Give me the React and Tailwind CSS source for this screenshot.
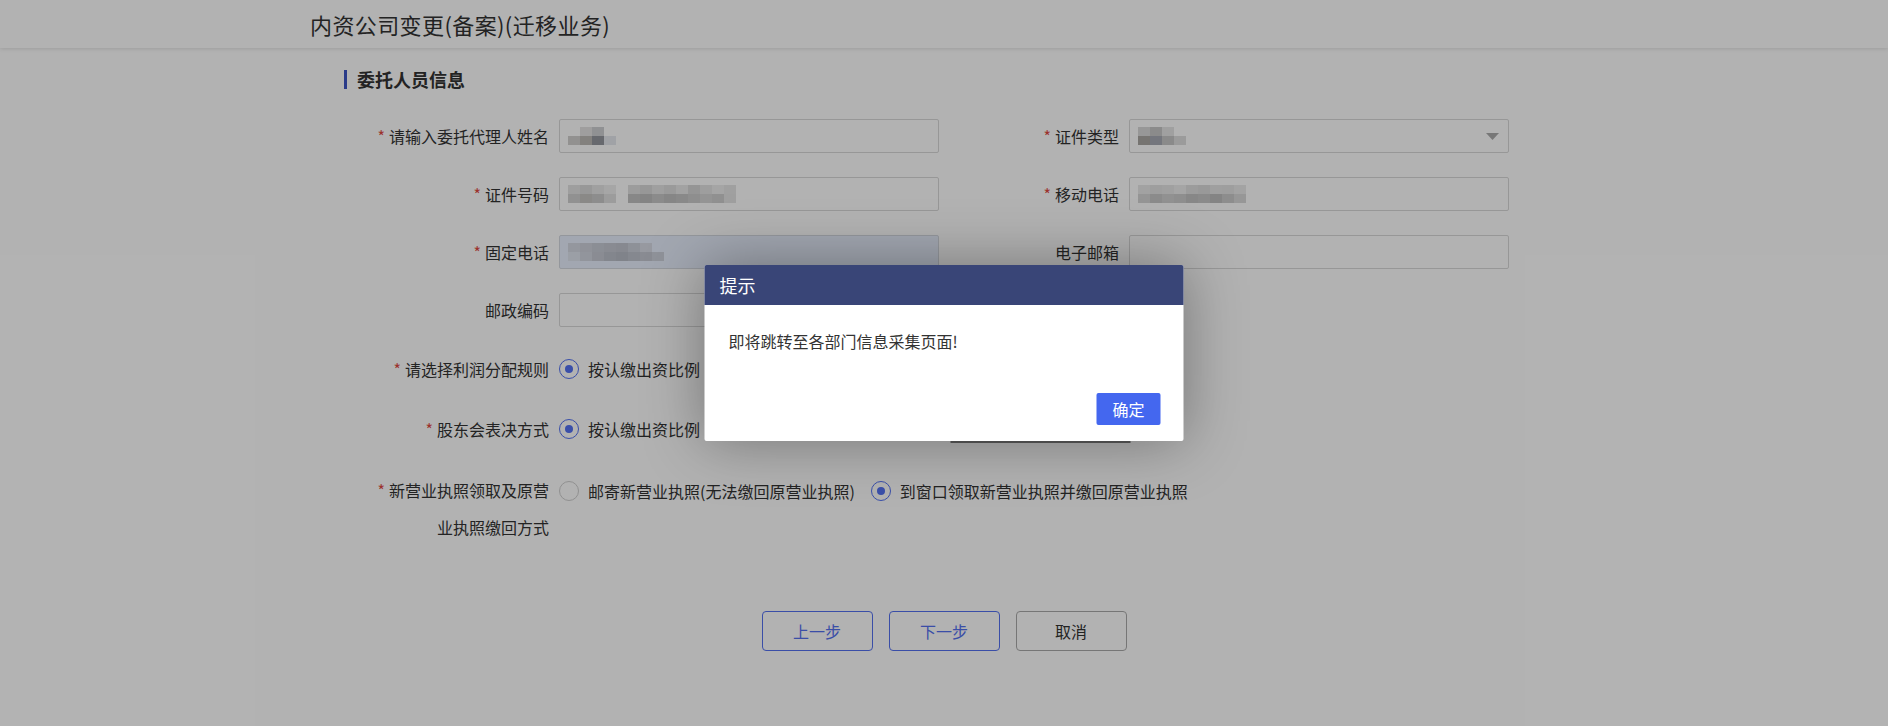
import React from "react";

const font = "font-['Noto_Sans_CJK_SC','Noto_Sans',sans-serif]";

// pixelated (mosaic) values, pre-mask colours
const nameCells = [
  ["bg-transparent", "bg-[#e4e3e2]", "bg-[#cfd0d3]", "bg-transparent"],
  ["bg-[#d2d0ce]", "bg-[#bcb9b5]", "bg-[#94979e]", "bg-[#e6e8ee]"],
];
const idCells = [
  ["bg-[#e2e2e2]", "bg-[#dadada]", "bg-[#e6e6e6]", "bg-[#eeeeee]", "bg-transparent", "bg-[#e0e0e0]", "bg-[#d8d8d8]", "bg-[#e4e4e4]", "bg-[#dddddd]", "bg-[#e8e8e8]", "bg-[#d6d6d6]", "bg-[#e2e2e2]", "bg-[#ececec]", "bg-[#e6e6e6]"],
  ["bg-[#d0d0d0]", "bg-[#c6c4c2]", "bg-[#cbcbcb]", "bg-[#e0e0e0]", "bg-transparent", "bg-[#c2c2c2]", "bg-[#bdbdbd]", "bg-[#c8c8c8]", "bg-[#c0c0c0]", "bg-[#c4c4c4]", "bg-[#cccccc]", "bg-[#d4d4d4]", "bg-[#cfcfcf]", "bg-[#e4e4e4]"],
];
const typeCells = [
  ["bg-[#d8d8d8]", "bg-[#c8c8c8]", "bg-[#e6e6e6]", "bg-transparent"],
  ["bg-[#a9a6a3]", "bg-[#a7a9b4]", "bg-[#c6c6c6]", "bg-[#dedede]"],
];
const mobileCells = [
  ["bg-[#e8e8e8]", "bg-[#e2e2e2]", "bg-[#e6e6e6]", "bg-[#ececec]", "bg-[#e0e0e0]", "bg-[#dcdcdc]", "bg-[#e4e4e4]", "bg-[#e2e2e2]", "bg-[#eaeaea]"],
  ["bg-[#d6d6d6]", "bg-[#c8c8c8]", "bg-[#d0d0d0]", "bg-[#cccccc]", "bg-[#c2c2c2]", "bg-[#c6c6c6]", "bg-[#bebebe]", "bg-[#cacaca]", "bg-[#d8d8d8]"],
];
const phoneCells = [
  ["bg-[#d4d8e2]", "bg-[#cfd2dc]", "bg-[#c8ccd6]", "bg-[#c4c7d1]", "bg-[#c2c5cf]", "bg-[#ccd0da]", "bg-[#d8dce6]", "bg-transparent", "bg-transparent"],
  ["bg-[#dfe4ee]", "bg-[#d2d6e0]", "bg-[#c6c9d3]", "bg-[#bcc0ca]", "bg-[#b8bcc6]", "bg-[#bfc3cd]", "bg-[#c4c8d2]", "bg-[#cdd1db]", "bg-transparent"],
];

function Mosaic({ cells }) {
  return (
    <div className="flex flex-col">
      {cells.map((row, i) => (
        <div key={i} className="flex">
          {row.map((c, j) => (
            <span key={j} className={"w-[12px] h-[9px] " + c} />
          ))}
        </div>
      ))}
    </div>
  );
}

function Label({ required, children }) {
  return (
    <div className="w-[180px] shrink-0 text-right whitespace-nowrap text-[16px] leading-[34px] text-[#333]">
      {required && <span className="text-[#e0483f] mr-[4px]">*</span>}
      {children}
    </div>
  );
}

function Box({ children, fill, select }) {
  return (
    <div
      className={
        "relative w-[380px] h-[34px] rounded-[2px] border flex items-center pl-[8px] " +
        (fill ? "bg-[#e8f0fe] border-[#d4d8e0]" : "bg-white border-[#d9d9d9]")
      }
    >
      {children}
      {select && (
        <svg className="absolute right-[9px] top-[13px]" width="13" height="7" viewBox="0 0 13 7">
          <path d="M0 0h13L6.5 7z" fill="#ababab" />
        </svg>
      )}
    </div>
  );
}

function Field({ label, required, children }) {
  return (
    <div className="flex items-center w-[570px]">
      <Label required={required}>{label}</Label>
      <div className="ml-[10px]">{children}</div>
    </div>
  );
}

function Radio({ checked, children }) {
  return (
    <div className="flex items-center gap-[9px]">
      {checked ? (
        <span className="w-[20px] h-[20px] rounded-full border-[1.5px] border-[#5371f2] flex items-center justify-center">
          <span className="w-[8px] h-[8px] rounded-full bg-[#5371f2]" />
        </span>
      ) : (
        <span className="w-[20px] h-[20px] rounded-full border-[1.5px] border-[#cfcfcf]" />
      )}
      <span className="text-[16px] text-[#333]">{children}</span>
    </div>
  );
}

export default function App() {
  return (
    <div className={"relative min-h-[726px] bg-white overflow-hidden " + font}>
      <header className="h-[48px] bg-white shadow-[0_1px_4px_rgba(0,0,0,0.12)]">
        <div className="w-[1268px] mx-auto h-full flex items-center text-[22px] tracking-[0.4px] text-[#333]">
          内资公司变更(备案)(迁移业务)
        </div>
      </header>

      <main className="w-[1200px] mx-auto">
        <div className="mt-[22px] h-[19px] flex items-center border-l-[3px] border-[#3d55c4] pl-[10px] text-[18px] font-bold text-[#333]">
          委托人员信息
        </div>

        <div className="mt-[30px] pl-[25px] flex flex-col gap-[24px]">
          <div className="flex">
            <Field label="请输入委托代理人姓名" required>
              <Box><Mosaic cells={nameCells} /></Box>
            </Field>
            <Field label="证件类型" required>
              <Box select><Mosaic cells={typeCells} /></Box>
            </Field>
          </div>
          <div className="flex">
            <Field label="证件号码" required>
              <Box><Mosaic cells={idCells} /></Box>
            </Field>
            <Field label="移动电话" required>
              <Box><Mosaic cells={mobileCells} /></Box>
            </Field>
          </div>
          <div className="flex">
            <Field label="固定电话" required>
              <Box fill><Mosaic cells={phoneCells} /></Box>
            </Field>
            <Field label="电子邮箱">
              <Box />
            </Field>
          </div>
          <div className="flex">
            <Field label="邮政编码">
              <Box />
            </Field>
          </div>
        </div>

        <div className="mt-[22px] pl-[25px] flex flex-col gap-[20px]">
          <div className="flex items-center h-[40px]">
            <Label required>请选择利润分配规则</Label>
            <div className="ml-[10px]">
              <Radio checked>按认缴出资比例</Radio>
            </div>
          </div>
          <div className="flex items-center h-[40px]">
            <Label required>股东会表决方式</Label>
            <div className="ml-[10px]">
              <Radio checked>按认缴出资比例</Radio>
            </div>
          </div>
          <div className="mt-[3px] flex items-start">
            <div className="w-[180px] shrink-0 text-right whitespace-nowrap text-[16px] leading-[37px] text-[#333]">
              <span className="text-[#e0483f] mr-[4px]">*</span>新营业执照领取及原营
              <br />
              业执照缴回方式
            </div>
            <div className="ml-[10px] h-[37px] flex items-center gap-[16px]">
              <Radio>邮寄新营业执照(无法缴回原营业执照)</Radio>
              <Radio checked>到窗口领取新营业执照并缴回原营业执照</Radio>
            </div>
          </div>
        </div>

        <div className="mt-[65px] flex justify-center gap-[16px]">
          <button className="w-[111px] h-[40px] rounded-[4px] border border-[#5370f0] text-[#5370f0] text-[16px]">
            上一步
          </button>
          <button className="w-[111px] h-[40px] rounded-[4px] border border-[#5370f0] text-[#5370f0] text-[16px]">
            下一步
          </button>
          <button className="w-[111px] h-[40px] rounded-[4px] border border-[#aaaaaa] text-[#333] text-[16px]">
            取消
          </button>
        </div>
      </main>

      {/* mask */}
      <div className="absolute inset-0 bg-black/30" />

      {/* dialog */}
      <div className="absolute left-1/2 top-[265px] -translate-x-1/2 w-[479px] bg-white rounded-[2px] shadow-[0_0_60px_rgba(0,0,0,0.35)]">
        <div className="h-[40px] bg-[#394577] rounded-t-[2px] pl-[15px] flex items-center text-[18px] text-white">
          提示
        </div>
        <div className="pt-[24px] px-[24px] text-[16px] leading-[24px] text-[#333]">
          即将跳转至各部门信息采集页面!
        </div>
        <div className="mt-[40px] pb-[16px] pr-[23px] flex justify-end">
          <button className="w-[64px] h-[32px] rounded-[2px] bg-[#4467ef] text-white text-[16px]">
            确定
          </button>
        </div>
        <span className="absolute left-[246px] top-full w-[180px] h-[2px] bg-[#4a4a4a]" />
      </div>
    </div>
  );
}
